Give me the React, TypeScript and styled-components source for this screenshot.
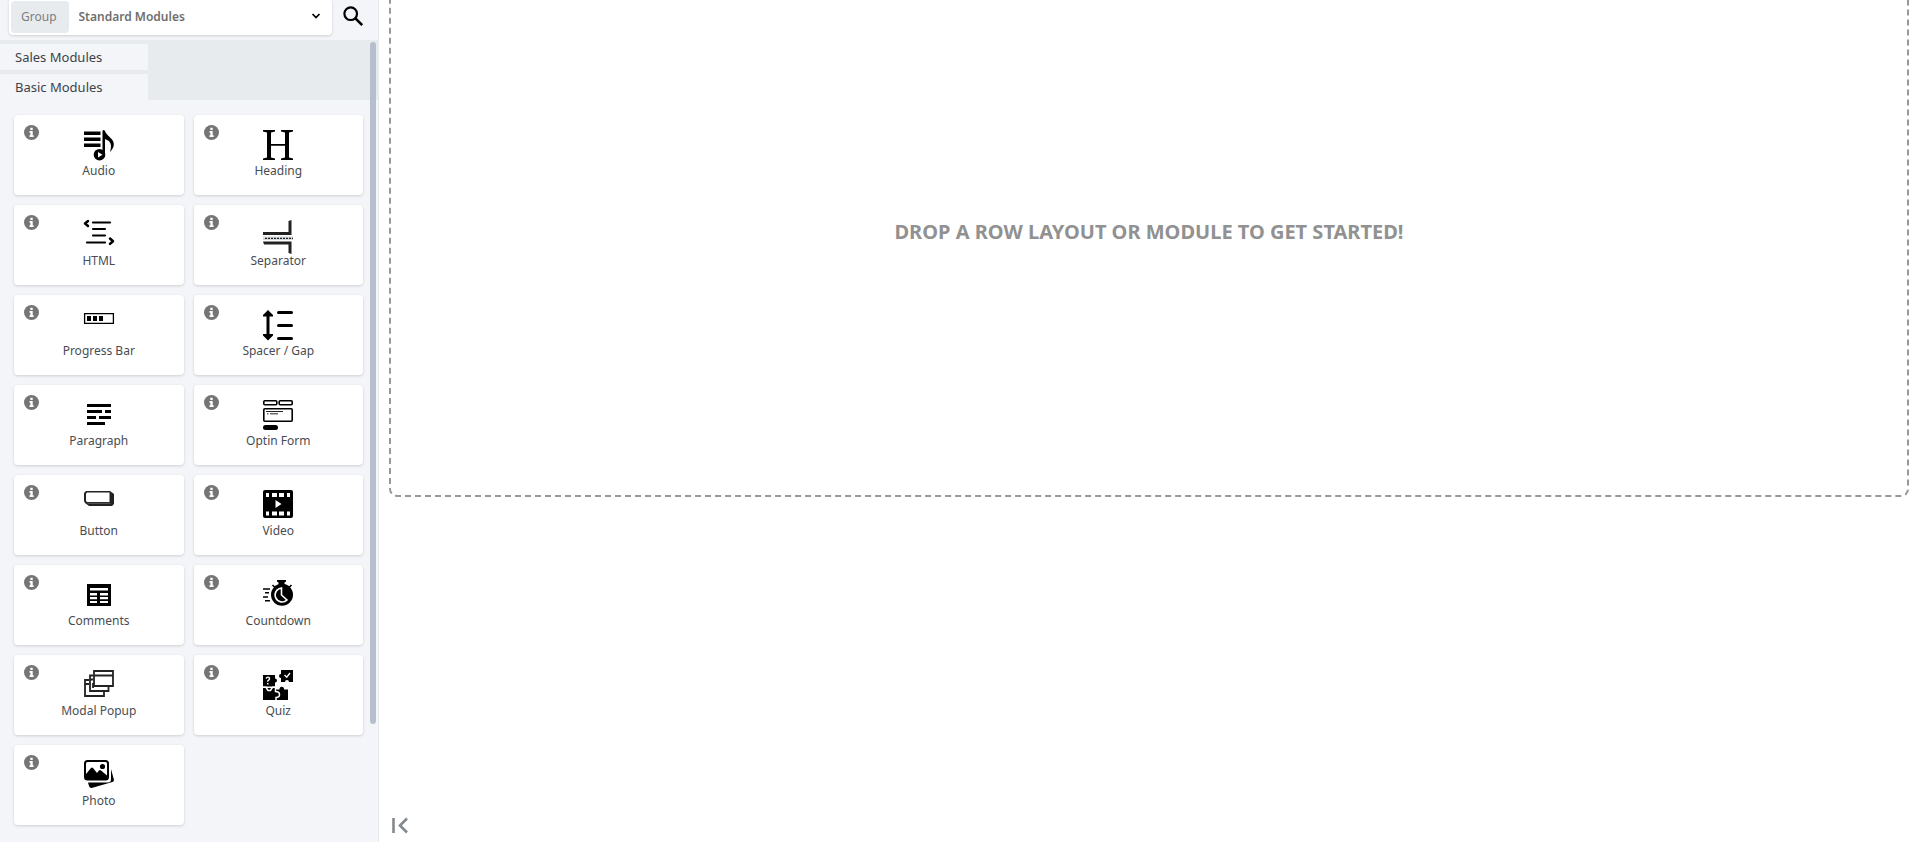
import React from 'react';
import styled, { createGlobalStyle } from 'styled-components';

const GlobalStyle = createGlobalStyle`
  *, *::before, *::after { box-sizing: border-box; }
  body {
    margin: 0;
    background: #fff;
    color: #484d53;
    font-family: 'Noto Sans', 'Open Sans', sans-serif;
    font-size: 12px;
    line-height: 20px;
  }
  button, select { font: inherit; color: inherit; }
`;

const Page = styled.div`
  display: flex;
  height: 100vh;
  overflow: hidden;
`;

const Sidebar = styled.aside`
  display: flex;
  flex-direction: column;
  flex: 0 0 379px;
  background: #f4f5f8;
  border-right: 1px solid #e7ebee;
`;

const Toolbar = styled.div`
  display: flex;
  flex: none;
  align-items: center;
  gap: 9px;
  height: 44px;
  margin-top: -4px;
  padding: 0 13px 4px 9px;
`;

const GroupField = styled.div`
  display: flex;
  flex: 1;
  height: 36px;
  margin-top: 2px;
  padding: 2px;
  background: #fff;
  border-radius: 4px;
  box-shadow: 0 1px 3px rgba(0, 0, 0, 0.16);
`;

const GroupLabel = styled.label`
  display: flex;
  align-items: center;
  padding: 0 12px 0 10px;
  background: #e7ebee;
  border-radius: 4px;
  color: #7d7d7d;
`;

const SelectWrap = styled.div`
  position: relative;
  flex: 1;
`;

const GroupSelect = styled.select`
  width: 100%;
  height: 100%;
  padding: 0 24px 0 10px;
  appearance: none;
  background: none;
  border: 0;
  color: #6f6f6f;
  font-weight: 600;
`;

const SelectChevron = styled.svg`
  position: absolute;
  right: 7px;
  top: 50%;
  margin-top: -6px;
  pointer-events: none;
`;

const IconButton = styled.button`
  display: flex;
  padding: 0;
  background: none;
  border: 0;
  cursor: pointer;
`;

const ScrollRegion = styled.div`
  position: relative;
  flex: 1;
  min-height: 0;
`;

const ScrollThumb = styled.div`
  position: absolute;
  top: 2px;
  right: 2px;
  width: 6px;
  height: 85%;
  background: #b6bfcb;
  border-radius: 3px;
`;

const Tabs = styled.nav`
  display: flex;
  flex-direction: column;
  gap: 4px;
  padding-top: 4px;
  background: #e7ebee;
`;

const Tab = styled.button`
  width: 148px;
  height: 26px;
  padding: 0 15px;
  background: #f4f5f8;
  border: 0;
  color: #3c434a;
  font-size: 13px;
  text-align: left;
  cursor: pointer;
`;

const ModuleGrid = styled.div`
  display: grid;
  grid-template-columns: repeat(2, 1fr);
  gap: 10px;
  padding: 15px 15px 15px 14px;
`;

const Card = styled.div`
  position: relative;
  display: flex;
  flex-direction: column;
  align-items: center;
  height: 80px;
  padding-top: 15px;
  background: #fff;
  border-radius: 4px;
  box-shadow: 0 1px 3px rgba(0, 0, 0, 0.16);
`;

const InfoButton = styled(IconButton)`
  position: absolute;
  top: 10px;
  left: 10px;
`;

const Glyph = styled.svg`
  display: block;
  flex: none;
  overflow: visible;
`;

const CardLabel = styled.span`
  line-height: 22px;
`;

const Canvas = styled.main`
  display: flex;
  flex: 1;
  flex-direction: column;
  justify-content: space-between;
  align-items: flex-start;
  padding: 0 6px 8px 10px;
`;

const DropZone = styled.section`
  display: flex;
  align-items: center;
  justify-content: center;
  width: 100%;
  height: 531px;
  margin-top: -34px;
  border: 2px dashed #999;
  border-radius: 8px;
`;

const DropText = styled.h1`
  margin: 0;
  color: #919191;
  font-size: 20px;
  font-weight: 700;
  line-height: 28px;
`;

const CollapseButton = styled(IconButton)`
  margin-left: 2px;
`;

const icons: Record<string, React.ReactNode> = {
  Audio: (
    <>
      <path d="M0 1.500h16.500v3.500H0zM0 7.500h16.500v3.500H0zM0 13.500h16.500v3.500H0z" />
      <path d="M18.500 1q1-2 2.500 0c1 4 5 5 8 10c2 4 0 8-3 11c1-4 2-7-1-11l-4-2v16h-2.500z" />
      <circle cx="15.500" cy="24.700" r="5.800" />
      <path d="M14 22l4.500 2.700-4.500 2.700z" fill="#fff" />
    </>
  ),
  Heading: (
    <path d="M0 0h12v1.500l-4 1V14h14V2.500L18 1.500V0h12v1.500l-4 1v25l4 1V30H18v-1.500l4-1V15.800H8v11.700l4 1V30H0v-1.500l4-1v-25L0 1.500z" />
  ),
  HTML: (
    <g fill="none" stroke="#000" strokeWidth="2.200" strokeLinecap="round" strokeLinejoin="round">
      <path d="M9 2.500h17M9 9h12M9 15.500h12M3 22.500h18" />
      <path d="M4 1L1 3.500 4 6M26 18.500l3 2.700-3 2.700" strokeWidth="2.500" />
    </g>
  ),
  Separator: (
    <g fill="#222">
      <path d="M25.500 1L28.500 0v15H0v-3h25.500zM0 21.500h28.500V34l-3-1v-8.500H1z" />
      <path d="M0 16.500h30v3.500H0z" fill="#d5d8da" />
      <path d="M2 18.300h28" stroke="#222" strokeWidth="1.300" strokeDasharray="2 1" />
    </g>
  ),
  'Progress Bar': (
    <>
      <path d="M.6 3.600h28.800v9.800H.6z" fill="none" stroke="#000" strokeWidth="1.300" />
      <path d="M3 6h4v5H3zM9 6h4v5H9zM15 6h4v5h-4z" />
    </>
  ),
  'Spacer / Gap': (
    <>
      <path d="M5 0l5 5v1.500H6.500v17.500H10v1.500l-5 5-5-5v-1.500h3.500V6.500H0V5z" />
      <path d="M15.500 2.500h13M15.500 15.500h13M15.500 28.500h13" stroke="#000" strokeWidth="3" strokeLinecap="round" />
    </>
  ),
  Paragraph: (
    <path d="M3 4h24v3H3zM3 10h15v3H3zM21 10h6v3h-6zM3 16h9v3H3zM15 16h12v3H15zM3 22h18v3H3z" />
  ),
  'Optin Form': (
    <>
      <g fill="none" stroke="#000" strokeWidth="1.600">
        <rect x=".8" y=".8" width="13" height="4" rx="1" />
        <rect x="16.200" y=".8" width="13" height="4" rx="1" />
        <rect x=".8" y="8.800" width="28.400" height="12.500" rx="1" />
      </g>
      <path d="M3 11.500h17M4 13.800h1.500M7 13.800h8" stroke="#222" />
      <rect y="25" width="15" height="5" rx="2.500" />
    </>
  ),
  Button: (
    <>
      <path d="M2 1h24l4 3v10l-2 2H5l-4-3-1-2V3z" fill="#222" />
      <path d="M3 2.500h22.500v9.500H3L2 11V3.500z" fill="#fff" />
      <path d="M3.500 13.300h23" stroke="#888" strokeWidth=".6" />
    </>
  ),
  Video: (
    <>
      <rect width="30" height="28" rx="2" />
      <path
        d="M3 3h3v4H3zM9 3h5v4H9zM16 3h5v4h-5zM24 3h3v4h-3zM3 21.500h3v4H3zM9 21.500h5v4H9zM16 21.500h5v4h-5zM24 21.500h3v4h-3zM12.500 10l6 4-6 4z"
        fill="#fff"
      />
    </>
  ),
  Comments: (
    <path fillRule="evenodd" d="M3 4h24v22H3zM6 8v2.500h18V8zM6 13v2.500h7V13zM16 13v2.500h8V13zM6 17v2.200h7V17zM16 17v2.200h8V17zM6 21v2h7v-2zM16 21v2h8v-2z" />
  ),
  Countdown: (
    <>
      <circle cx="19" cy="14.800" r="11" />
      <path d="M14 0h9v1.500l-1.500 1V5h-6V2.500L14 1.500z" />
      <path d="M9.500 5l3 3M28.500 5l-3 3M0 9h7M2 12.800h4M0 17h5M2 20.800h5" stroke="#000" strokeWidth="1.600" />
      <path d="M18.500 8v7l5.500 5a7 7 0 1 1-5.500-12z" fill="none" stroke="#fff" strokeWidth="1.600" />
    </>
  ),
  'Modal Popup': (
    <g fill="none" stroke="#222" strokeWidth="1.800">
      <path d="M10 1h19v15H10zM10 5.500h19" />
      <path d="M9 5.500H6V21h18.500v-4M6 9.500h3M5 10H1v16h19v-4M1 14h4M9 13v5" />
    </g>
  ),
  Quiz: (
    <>
      <path d="M18 0h12v12h-4a2 2 0 1 0-4 0h-4V8a2 2 0 1 1 0-4z" />
      <path d="M0 5h12v3.500a2 2 0 1 1 0 4V16.500H0z" />
      <path d="M0 18h12.500l1 1.500h3a2.300 2.300 0 1 1 4.500 0h4V30H0z" />
      <path d="M0 17.300h3l2 3.200h2.500l2-3.200h3.500M12.500 17v4.500q4 0 4 3t-3.500 3V30" fill="none" stroke="#fff" strokeWidth="1.500" />
      <path d="M3 8.500q1.800-2.500 3.500-.5q.5 1.500-1.700 2.800v1M4.800 13v1.500M21.500 5l2.200 2.200L27 3" fill="none" stroke="#fff" strokeWidth="1.400" />
    </>
  ),
  Photo: (
    <>
      <rect x="1" y="1" width="23" height="18.500" rx="2.500" fill="none" stroke="#000" strokeWidth="2" />
      <path d="M2 14l5-6q1-1 2 0l4 5 2-2.500q1-1 2 0l6 5v3.500H2z" />
      <circle cx="18.500" cy="6.500" r="2.600" />
      <path d="M27 9l3 11q0 1.500-1.500 2L7.500 28q-2 0-2.500-2l-1-3.500h20q3 0 3-3z" />
    </>
  ),
};

const InfoIcon = () => (
  <Glyph width="15" height="15" viewBox="0 0 15 15" aria-hidden="true">
    <circle cx="7.500" cy="7.500" r="7.500" fill="#757575" />
    <path d="M6.300 2.800h2.400v2.100H6.300zM5.500 6.100h3.200v4.200h.9v1.700H5.500v-1.700h.9V7.700h-.9z" fill="#fff" />
  </Glyph>
);

const ModuleCard = ({ name }: { name: string }) => (
  <Card>
    <InfoButton type="button" aria-label={`About ${name}`}>
      <InfoIcon />
    </InfoButton>
    <Glyph width="30" height="30" viewBox="0 0 30 30" aria-hidden="true">
      {icons[name]}
    </Glyph>
    <CardLabel>{name}</CardLabel>
  </Card>
);

export default function App() {
  return (
    <>
      <GlobalStyle />
      <Page>
        <Sidebar>
          <Toolbar>
            <GroupField>
              <GroupLabel htmlFor="module-group">Group</GroupLabel>
              <SelectWrap>
                <GroupSelect id="module-group">
                  <option>Standard Modules</option>
                </GroupSelect>
                <SelectChevron width="14" height="10" viewBox="0 0 14 10" aria-hidden="true">
                  <path d="M3.500 3L7 6.500 10.500 3" fill="none" stroke="#000" strokeWidth="1.700" />
                </SelectChevron>
              </SelectWrap>
            </GroupField>
            <IconButton type="button" aria-label="Search modules">
              <Glyph width="24" height="24" viewBox="0 0 24 24" aria-hidden="true">
                <circle cx="9.700" cy="9.700" r="6.300" fill="none" stroke="#000" strokeWidth="2.200" />
                <path d="M14.200 14.200l7 7" stroke="#000" strokeWidth="2.600" />
              </Glyph>
            </IconButton>
          </Toolbar>
          <ScrollRegion>
            <Tabs>
              <Tab type="button">Sales Modules</Tab>
              <Tab type="button">Basic Modules</Tab>
            </Tabs>
            <ModuleGrid>
              {Object.keys(icons).map((name) => (
                <ModuleCard key={name} name={name} />
              ))}
            </ModuleGrid>
            <ScrollThumb />
          </ScrollRegion>
        </Sidebar>
        <Canvas>
          <DropZone>
            <DropText>DROP A ROW LAYOUT OR MODULE TO GET STARTED!</DropText>
          </DropZone>
          <CollapseButton type="button" aria-label="Collapse panel">
            <Glyph width="17" height="17" viewBox="0 0 17 17" aria-hidden="true">
              <path d="M2.500 1v15M16 1.500L9 8.500l7 7" fill="none" stroke="#84898f" strokeWidth="2.600" />
            </Glyph>
          </CollapseButton>
        </Canvas>
      </Page>
    </>
  );
}
